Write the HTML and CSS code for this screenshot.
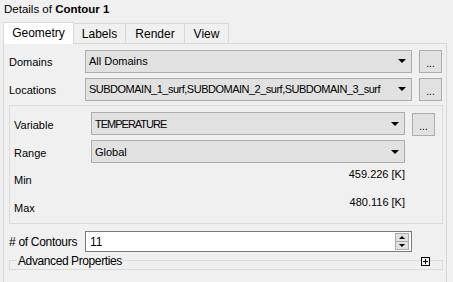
FILE: index.html
```html
<!DOCTYPE html>
<html>
<head>
    <title>Details of Contour 1</title>
    <link rel="stylesheet" href="styles.css">
</head>
<body>
    <div class="title">Details of <b>Contour 1</b></div>

    <div class="tabs">
        <div class="tab active">Geometry</div>
        <div class="tab tab-labels">Labels</div>
        <div class="tab tab-render">Render</div>
        <div class="tab tab-view">View</div>
    </div>

    <div class="pane">
        <div class="row">
            <div class="label">Domains</div>
            <div class="combo"><span>All Domains</span><i class="arrow"></i></div>
            <div class="btn">...</div>
        </div>
        <div class="row">
            <div class="label">Locations</div>
            <div class="combo"><span class="tight">SUBDOMAIN_1_surf,SUBDOMAIN_2_surf,SUBDOMAIN_3_surf</span><i class="arrow"></i></div>
            <div class="btn">...</div>
        </div>

        <div class="group">
            <div class="row">
                <div class="label">Variable</div>
                <div class="combo"><span class="caps">TEMPERATURE</span><i class="arrow"></i></div>
                <div class="btn">...</div>
            </div>
            <div class="row">
                <div class="label">Range</div>
                <div class="combo"><span>Global</span><i class="arrow"></i></div>
                <div class="btn-space"></div>
            </div>
            <div class="minmax">
                <div class="label">Min</div>
                <div class="value">459.226 [K]</div>
            </div>
            <div class="minmax">
                <div class="label">Max</div>
                <div class="value">480.116 [K]</div>
            </div>
        </div>

        <div class="row contours">
            <div class="label"># of Contours</div>
            <div class="spin">
                <span>11</span>
                <div class="spin-btns">
                    <div class="up"></div>
                    <div class="down"></div>
                </div>
            </div>
        </div>

        <div class="advanced">
            <span class="adv-title">Advanced Properties</span>
            <span class="plus"></span>
        </div>
    </div>
</body>
</html>
```

FILE: styles.css
```css
body {
    margin: 0;
    background-color: #f0f0f0;
    font-family: "Liberation Sans", Arial, sans-serif;
    font-size: 11px;
    color: #000;
    width: 453px;
    height: 282px;
    overflow: hidden;
}

.title {
    padding: 3px 4px 0 4px;
    height: 19px;
    font-size: 11.5px;
}

/* tab bar */
.tabs {
    display: flex;
    align-items: flex-end;
    margin-left: 3px;
    height: 21px;
}

.tab {
    height: 20px;
    line-height: 21px;
    text-align: center;
    box-sizing: border-box;
    border: 1px solid #d9d9d9;
    border-bottom: none;
    border-left: none;
    background-color: #f0f0f0;
    font-size: 12px;
}

.tab.active {
    width: 71px;
    height: 22px;
    line-height: 21px;
    background-color: #fff;
    border-left: 1px solid #d9d9d9;
    position: relative;
    top: 1px;
}

.tab-labels { width: 52px; }
.tab-render { width: 59px; }
.tab-view { width: 44px; }

.pane {
    margin: 0 6px 0 3px;
    border: 1px solid #d9d9d9;
    border-bottom: none;
    height: 240px;
    padding: 5px 0 0 5px;
}

.row {
    display: flex;
    align-items: center;
    height: 24px;
    margin-bottom: 4px;
}

.label {
    width: 76px;
    flex-shrink: 0;
    padding-top: 2px;
    white-space: nowrap;
}

.combo {
    width: 327px;
    height: 23px;
    flex-shrink: 0;
    border: 1px solid #adadad;
    background-color: #e1e1e1;
    display: flex;
    align-items: center;
    justify-content: space-between;
    padding: 0 5px 0 3px;
    box-sizing: border-box;
    white-space: nowrap;
    overflow: hidden;
}

.combo .tight {
    letter-spacing: -0.5px;
}

.combo .caps {
    letter-spacing: -1px;
}

.arrow {
    width: 0;
    height: 0;
    flex-shrink: 0;
    border-left: 4px solid transparent;
    border-right: 4px solid transparent;
    border-top: 4px solid #000;
}

.btn {
    width: 23px;
    height: 23px;
    flex-shrink: 0;
    box-sizing: border-box;
    margin-left: 7px;
    margin-top: 1px;
    border: 1px solid #adadad;
    background-color: #e1e1e1;
    text-align: center;
    line-height: 25px;
    font-size: 10px;
}

.btn-space {
    width: 23px;
    margin-left: 7px;
}

/* group box */
.group {
    width: 434px;
    height: 119px;
    box-sizing: border-box;
    border: 1px solid #dcdcdc;
    padding: 6px 0 0 4px;
}

.group .label {
    width: 77px;
}

.group .combo {
    width: 314px;
}

.group .row {
    height: 23px;
    margin-bottom: 5px;
}

.minmax {
    display: flex;
    justify-content: space-between;
    width: 391px;
    height: 28px;
}

.minmax .label {
    padding-top: 6px;
}

.minmax .value {
    padding-top: 0;
}

/* contours spin box */
.contours {
    margin-top: 7px;
    height: 21px;
}

.contours .label {
    font-size: 12px;
    letter-spacing: -0.3px;
    width: 76px;
    padding-top: 0;
}

.spin {
    width: 327px;
    height: 21px;
    flex-shrink: 0;
    box-sizing: border-box;
    border: 1px solid #7a7a7a;
    background-color: #fff;
    display: flex;
    align-items: center;
    justify-content: space-between;
    padding: 0 1px 0 4px;
    font-size: 12px;
}

.spin-btns {
    width: 14px;
    height: 17px;
    display: flex;
    flex-direction: column;
    border: 1px solid #adadad;
    box-sizing: border-box;
    margin-right: 1px;
}

.spin-btns .up,
.spin-btns .down {
    flex: 1;
    background-color: #e1e1e1;
    display: flex;
    align-items: center;
    justify-content: center;
}

.spin-btns .up {
    border-bottom: 1px solid #adadad;
}

.spin-btns .up::after {
    content: "";
    border-left: 3px solid transparent;
    border-right: 3px solid transparent;
    border-bottom: 3px solid #000;
}

.spin-btns .down::after {
    content: "";
    border-left: 3px solid transparent;
    border-right: 3px solid transparent;
    border-top: 3px solid #000;
}

/* advanced properties collapsed group */
.advanced {
    margin-top: 8px;
    width: 434px;
    height: 10px;
    box-sizing: border-box;
    border: 1px solid #dcdcdc;
    border-top: none;
    display: flex;
    justify-content: space-between;
    align-items: flex-start;
    background: linear-gradient(#dcdcdc, #dcdcdc) no-repeat 0 0 / 100% 1px;
}

.adv-title {
    font-size: 12px;
    letter-spacing: -0.4px;
    background-color: #f0f0f0;
    padding: 0 1px;
    margin: -6px 0 0 7px;
    line-height: 14px;
}

.plus {
    width: 9px;
    height: 9px;
    box-sizing: border-box;
    border: 1px solid #000;
    background-color: #f0f0f0;
    margin: -3px 12px 0 0;
    background-image: linear-gradient(#000, #000), linear-gradient(#000, #000);
    background-size: 5px 1px, 1px 5px;
    background-position: center, center;
    background-repeat: no-repeat;
}
```
